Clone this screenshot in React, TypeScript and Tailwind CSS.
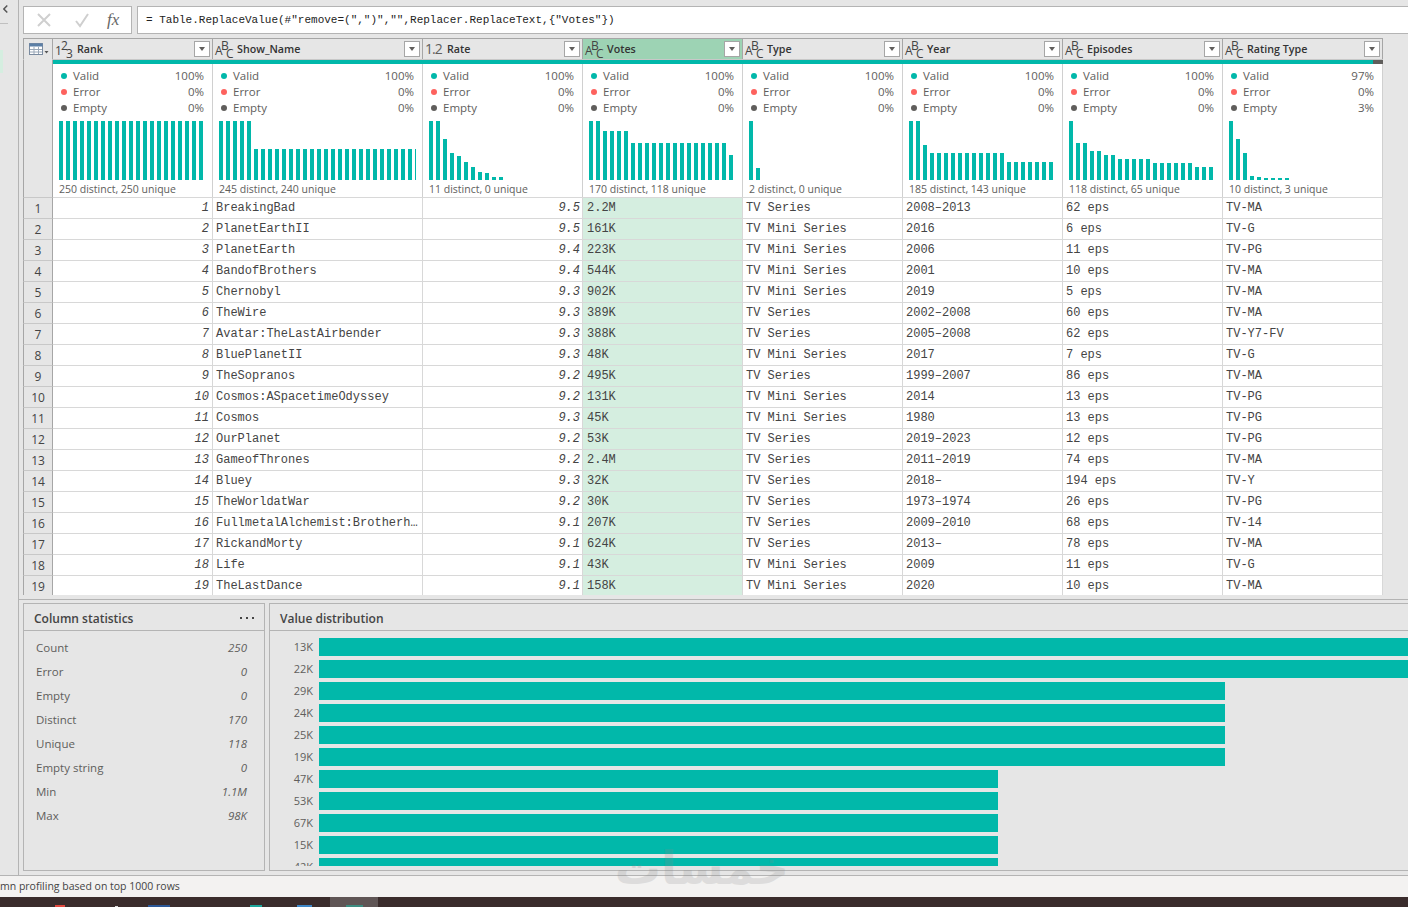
import React from 'react';

const M = 'TV Mini Series';
const S = 'TV Series';
const rows: [string, string, string, string, string, string, string][] = [
  ['BreakingBad', '9.5', '2.2M', S, '2008–2013', '62 eps', 'TV-MA'],
  ['PlanetEarthII', '9.5', '161K', M, '2016', '6 eps', 'TV-G'],
  ['PlanetEarth', '9.4', '223K', M, '2006', '11 eps', 'TV-PG'],
  ['BandofBrothers', '9.4', '544K', M, '2001', '10 eps', 'TV-MA'],
  ['Chernobyl', '9.3', '902K', M, '2019', '5 eps', 'TV-MA'],
  ['TheWire', '9.3', '389K', S, '2002–2008', '60 eps', 'TV-MA'],
  ['Avatar:TheLastAirbender', '9.3', '388K', S, '2005–2008', '62 eps', 'TV-Y7-FV'],
  ['BluePlanetII', '9.3', '48K', M, '2017', '7 eps', 'TV-G'],
  ['TheSopranos', '9.2', '495K', S, '1999–2007', '86 eps', 'TV-MA'],
  ['Cosmos:ASpacetimeOdyssey', '9.2', '131K', M, '2014', '13 eps', 'TV-PG'],
  ['Cosmos', '9.3', '45K', M, '1980', '13 eps', 'TV-PG'],
  ['OurPlanet', '9.2', '53K', S, '2019–2023', '12 eps', 'TV-PG'],
  ['GameofThrones', '9.2', '2.4M', S, '2011–2019', '74 eps', 'TV-MA'],
  ['Bluey', '9.3', '32K', S, '2018–', '194 eps', 'TV-Y'],
  ['TheWorldatWar', '9.2', '30K', S, '1973–1974', '26 eps', 'TV-PG'],
  ['FullmetalAlchemist:Brotherhood', '9.1', '207K', S, '2009–2010', '68 eps', 'TV-14'],
  ['RickandMorty', '9.1', '624K', S, '2013–', '78 eps', 'TV-MA'],
  ['Life', '9.1', '43K', M, '2009', '11 eps', 'TV-G'],
  ['TheLastDance', '9.1', '158K', M, '2020', '10 eps', 'TV-MA'],
];

const rep = (n: number, h: number) => Array(n).fill(h) as number[];

type Col = {
  name: string;
  kind: 'int' | 'abc' | 'dec';
  bars: number[];
  foot: string;
  valid?: string;
  empty?: string;
  active?: boolean;
};

const cols: Col[] = [
  { name: 'Rank', kind: 'int', bars: rep(21, 59), foot: '250 distinct, 250 unique' },
  { name: 'Show_Name', kind: 'abc', bars: [...rep(5, 59), ...rep(24, 31)], foot: '245 distinct, 240 unique' },
  { name: 'Rate', kind: 'dec', bars: [59, 59, 41, 27, 24, 18, 13, 8, 7, 3, 3], foot: '11 distinct, 0 unique' },
  { name: 'Votes', kind: 'abc', active: true, bars: [59, 59, 49, 49, 49, 49, ...rep(14, 37), 25], foot: '170 distinct, 118 unique' },
  { name: 'Type', kind: 'abc', bars: [59, 12], foot: '2 distinct, 0 unique' },
  { name: 'Year', kind: 'abc', bars: [59, 59, 35, ...rep(11, 27), ...rep(7, 18)], foot: '185 distinct, 143 unique' },
  { name: 'Episodes', kind: 'abc', bars: [59, 37, 37, 29, 29, 25, 25, ...rep(5, 21), ...rep(6, 17), ...rep(3, 13)], foot: '118 distinct, 65 unique' },
  { name: 'Rating Type', kind: 'abc', bars: [59, 41, 27, 4, 3, 2, 2, 2, 2], foot: '10 distinct, 3 unique', valid: '97%', empty: '3%' },
];

const gridCols = 'grid grid-cols-[30px_160px_210px_repeat(6,160px)] w-[1360px]';

function TypeIcon({ kind }: { kind: Col['kind'] }) {
  if (kind === 'dec') {
    return <span className="w-[20px] shrink-0 text-[14px] leading-none text-[#605e5c] tracking-[-1px]">1.2</span>;
  }
  const [a, b, c] = kind === 'int' ? ['1', '2', '3'] : ['A', 'B', 'C'];
  return (
    <span className="relative w-[20px] h-[19px] shrink-0 text-[12px] leading-none text-[#444]">
      <span className="absolute left-0 top-[5px]">{a}</span>
      <span className="absolute left-[6px] top-0">{b}</span>
      <span className="absolute left-[11px] top-[8px]">{c}</span>
    </span>
  );
}

function FilterButton() {
  return (
    <span className="w-[16px] h-[16px] shrink-0 bg-white border border-[#a6a6a6] flex items-center justify-center">
      <span className="w-0 h-0 border-l-[3.5px] border-r-[3.5px] border-t-[4px] border-l-transparent border-r-transparent border-t-[#605e5c]" />
    </span>
  );
}

function StatLine({ color, label, value }: { color: string; label: string; value: string }) {
  return (
    <div className="h-[16px] flex items-center text-[11.5px] text-[#605e5c]">
      <span className={`w-[6px] h-[6px] rounded-full mr-[6px] shrink-0 ${color}`} />
      <span>{label}</span>
      <span className="ml-auto">{value}</span>
    </div>
  );
}

function Profile({ col, last }: { col: Col; last: boolean }) {
  return (
    <div className={`h-[133px] bg-white flex flex-col pl-[8px] pr-[8px] pt-[4px] border-r border-[#d0d0d0] ${last ? 'border-[#a6a6a6]' : ''}`}>
      <StatLine color="bg-[#01b8aa]" label="Valid" value={col.valid ?? '100%'} />
      <StatLine color="bg-[#fd625e]" label="Error" value="0%" />
      <StatLine color="bg-[#605e5c]" label="Empty" value={col.empty ?? '0%'} />
      <div className="-ml-[2px] -mr-[2px] mt-[5px] h-[59px] flex items-end gap-[3px] overflow-hidden">
        {col.bars.map((h, i) => (
          <span key={i} className="w-[4px] shrink-0 bg-[#01b8aa]" style={{ height: h }} />
        ))}
      </div>
      <div className="-ml-[2px] mt-[1px] h-[16px] leading-[16px] text-[10.5px] text-[#605e5c] whitespace-nowrap">{col.foot}</div>
    </div>
  );
}

function Table() {
  return (
    <div className="mt-[4px] ml-[4px] w-[1360px] h-[557px] overflow-hidden border-t border-[#a6a6a6] shrink-0">
      <div className={gridCols}>
        <div className="h-[20px] bg-[#e6e6e6] border-l border-r border-[#a6a6a6] flex items-center pl-[5px]">
          <svg width="20" height="13" viewBox="0 0 20 13">
            <rect x="0.5" y="0.5" width="13" height="11" fill="#fff" stroke="#7a8ba0" />
            <rect x="0.5" y="0.5" width="13" height="3" fill="#5b7fa6" />
            <path d="M5 4v7M9.5 4v7M1 6.5h12M1 9h12" stroke="#9aa8b8" strokeWidth="1" />
            <path d="M15.5 8h4l-2 2.5z" fill="#555" />
          </svg>
        </div>
        {cols.map((c) => (
          <div
            key={c.name}
            className={`h-[20px] flex items-center pl-[2px] pr-[2px] border-r border-[#a6a6a6] ${c.active ? 'bg-[#9dd3b4]' : 'bg-[#e6e6e6]'}`}
          >
            <TypeIcon kind={c.kind} />
            <span className="ml-[2px] text-[10.7px] font-semibold text-[#333] whitespace-nowrap">{c.name}</span>
            <span className="ml-auto"><FilterButton /></span>
          </div>
        ))}

        <div className="row-span-2 bg-[#e6e6e6] border-l border-r border-[#a6a6a6] border-t border-t-[#e6e6e6]" />
        {cols.map((c) => (
          <div key={c.name} className="h-[5px] bg-white border-t border-[#c8c8c8] flex">
            <span className="flex-1 h-[4px] bg-[#01b8aa]" />
            {c.empty && <span className="w-[10px] h-[4px] bg-[#605e5c]" />}
          </div>
        ))}
        {cols.map((c, i) => (
          <Profile key={c.name} col={c} last={i === cols.length - 1} />
        ))}

        {rows.map((r, i) => (
          <React.Fragment key={i}>
            <div className="h-[21px] bg-[#e6e6e6] border-l border-r border-t border-[#c8c8c8] border-r-[#a6a6a6] border-l-[#a6a6a6] flex items-center justify-center pt-[2px] text-[12px] text-[#444]">
              {i + 1}
            </div>
            <div className="h-[21px] bg-white border-t border-r border-[#d8d8d8] font-['Liberation_Mono',monospace] text-[12px] leading-[20px] italic text-right pr-[3px] text-[#444]">{i + 1}</div>
            <div className="h-[21px] bg-white border-t border-r border-[#d8d8d8] font-['Liberation_Mono',monospace] text-[12px] leading-[20px] pl-[3px] pr-[3px] text-[#444] truncate">{r[0]}</div>
            <div className="h-[21px] bg-white border-t border-r border-[#d8d8d8] font-['Liberation_Mono',monospace] text-[12px] leading-[20px] italic text-right pr-[2px] text-[#444]">{r[1]}</div>
            <div className="h-[21px] bg-[#d5eee0] border-t border-r border-[#d8d8d8] font-['Liberation_Mono',monospace] text-[12px] leading-[20px] pl-[4px] text-[#444]">{r[2]}</div>
            {r.slice(3).map((v, j) => (
              <div key={j} className="h-[21px] bg-white border-t border-r pl-[3px] border-[#d8d8d8] font-['Liberation_Mono',monospace] text-[12px] leading-[20px] whitespace-pre text-[#444]">
                {v}
              </div>
            ))}
          </React.Fragment>
        ))}
      </div>
    </div>
  );
}

const stats: [string, string][] = [
  ['Count', '250'],
  ['Error', '0'],
  ['Empty', '0'],
  ['Distinct', '170'],
  ['Unique', '118'],
  ['Empty string', '0'],
  ['Min', '1.1M'],
  ['Max', '98K'],
];

const dist: [string, string][] = [
  ['13K', 'w-[1100px]'],
  ['22K', 'w-[1100px]'],
  ['29K', 'w-[906px]'],
  ['24K', 'w-[906px]'],
  ['25K', 'w-[906px]'],
  ['19K', 'w-[906px]'],
  ['47K', 'w-[679px]'],
  ['53K', 'w-[679px]'],
  ['67K', 'w-[679px]'],
  ['15K', 'w-[679px]'],
  ['42K', 'w-[679px]'],
];

function Panels() {
  return (
    <div className="mt-[4px] border-t border-[#b4b4b4] flex-1 flex gap-[4px] pl-[4px] pt-[3px] pb-[4px] min-h-0 bg-[#e6e6e6]">
      <div className="w-[242px] border border-[#b4b4b4] shrink-0 flex flex-col">
        <div className="h-[27px] pt-[4px] border-b border-[#b4b4b4] flex items-center pl-[10px] pr-[10px] text-[12px] font-semibold text-[#444]">
          <span>Column statistics</span>
          <span className="ml-auto flex gap-[4px] -mt-[3px]">
            <span className="w-[2px] h-[2px] bg-[#444]" />
            <span className="w-[2px] h-[2px] bg-[#444]" />
            <span className="w-[2px] h-[2px] bg-[#444]" />
          </span>
        </div>
        <div className="pt-[5px] pl-[12px] pr-[17px]">
          {stats.map(([k, v]) => (
            <div key={k} className="h-[24px] flex items-center justify-between text-[11.5px] text-[#605e5c]">
              <span>{k}</span>
              <span className="italic">{v}</span>
            </div>
          ))}
        </div>
      </div>
      <div className="flex-1 min-w-0 border-t border-l border-b border-[#b4b4b4] flex flex-col">
        <div className="h-[27px] pt-[4px] border-b border-[#b4b4b4] flex items-center pl-[10px] text-[12px] font-semibold text-[#444]">Value distribution</div>
        <div className="mt-[7px] h-[228px] overflow-hidden flex flex-col gap-[4px]">
          {dist.map(([k, w], i) => (
            <div key={i} className="h-[18px] shrink-0 flex items-center">
              <span className="w-[44px] shrink-0 pr-[1px] text-right text-[11px] text-[#605e5c]">{k}</span>
              <span className={`ml-[5px] h-[18px] shrink-0 bg-[#01b8aa] ${w}`} />
            </div>
          ))}
        </div>
      </div>
    </div>
  );
}

export default function App() {
  return (
    <div className="relative w-[1408px] h-[907px] overflow-hidden flex flex-col bg-[#e6e6e6] font-['Open_Sans',sans-serif]">
      <div className="flex-1 min-h-0 flex">
        <div className="w-[19px] shrink-0 border-r border-[#b4b4b4] bg-[#e6e6e6] flex flex-col">
          <div className="h-[24px] border-b border-[#c0c0c0] mr-[10px] flex items-center pl-[3px]">
            <svg width="7" height="12" viewBox="0 0 7 12" className="-mt-[6px]">
              <path d="M6 1 1.2 6 6 11" fill="none" stroke="#555" strokeWidth="2" />
            </svg>
          </div>
          <div className="mt-[26px] w-[3px] h-[23px] bg-[#d5eee0]" />
        </div>
        <div className="flex-1 min-w-0 flex flex-col">
          <div className="h-[34px] pt-[6px] pl-[4px] flex gap-[5px] shrink-0">
            <div className="w-[109px] h-[28px] bg-white border border-[#b4b4b4] flex items-center pl-[12px]">
              <svg width="16" height="16" viewBox="0 0 16 16">
                <path d="M2 2l12 12M14 2 2 14" stroke="#cfcfcf" strokeWidth="2" fill="none" />
              </svg>
              <svg width="16" height="16" viewBox="0 0 16 16" className="ml-[22px]">
                <path d="M2 9l4 5 8-12" stroke="#cfcfcf" strokeWidth="2" fill="none" />
              </svg>
              <span className="ml-[17px] font-['Liberation_Serif',serif] italic text-[17px] text-[#666]">fx</span>
            </div>
            <div className="flex-1 h-[28px] pt-[1px] bg-white border-t border-l border-b border-[#b4b4b4] flex items-center pl-[8px] font-['Liberation_Mono',monospace] text-[11px] text-[#222] whitespace-pre">
              {'= Table.ReplaceValue(#"remove=(",")","",Replacer.ReplaceText,{"Votes"})'}
            </div>
          </div>
          <Table />
          <Panels />
        </div>
      </div>
      <div className="h-[22px] shrink-0 pt-[1px] bg-[#f3f2f1] border-t border-[#b4b4b4] text-[10.5px] text-[#444] flex items-center whitespace-nowrap pl-0">
        mn profiling based on top 1000 rows
      </div>
      <div className="h-[10px] shrink-0 bg-[#3a2c2c] flex items-end">
        <span className="ml-[55px] w-[10px] h-[2px] bg-[#e0483e]" />
        <span className="ml-[50px] w-[3px] h-[1px] bg-[#ddd]" />
        <span className="ml-[30px] w-[22px] h-[2px] bg-[#2b5797]" />
        <span className="ml-[80px] w-[12px] h-[2px] bg-[#1aa59a]" />
        <span className="ml-[35px] w-[15px] h-[2px] bg-[#3d86c6]" />
        <span className="ml-[18px] w-[48px] h-[10px] bg-[#5f5555] flex items-end justify-center">
          <span className="w-[17px] h-[2px] bg-[#3c8c80]" />
        </span>
      </div>
      <div dir="rtl" className="absolute left-[619px] top-[843px] w-[170px] text-center font-['DejaVu_Sans',sans-serif] font-bold text-[46px] leading-[50px] text-[#8a8a8a] opacity-20 pointer-events-none">
        خمسات
      </div>
    </div>
  );
}
